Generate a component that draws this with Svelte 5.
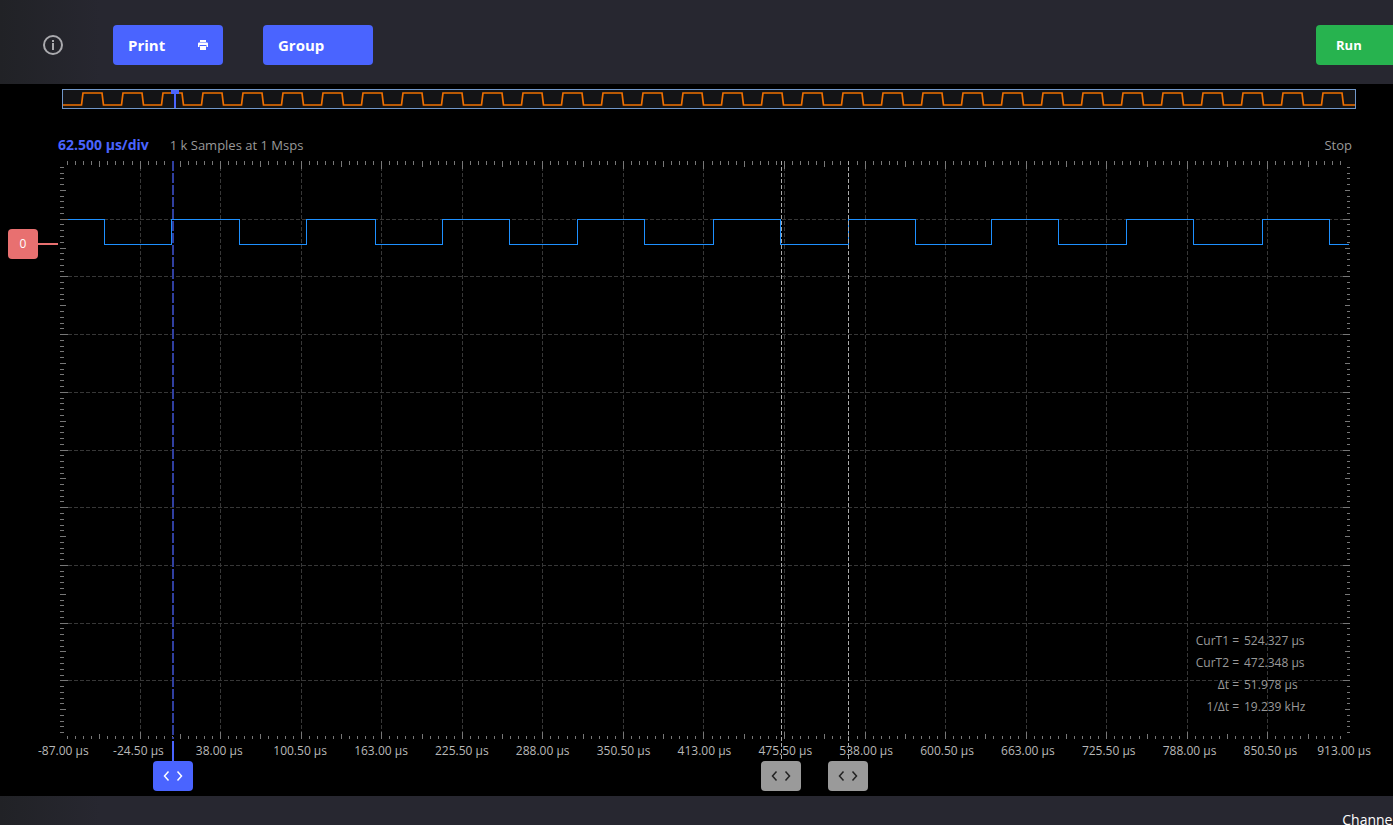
<script>
  let plotWidth = $state(1290);
  let overviewWidth = $state(1294);

  const plotHeight = 578;
  const columns = 16;
  const rows = 10;
  const edges = [44, 111, 179, 246, 315, 382, 449, 517, 584, 653, 720, 788, 855, 931, 998, 1066, 1133, 1202, 1269];
  const labels = ['-24.50', '38.00', '100.50', '163.00', '225.50', '288.00', '350.50', '413.00', '475.50', '538.00', '600.50', '663.00', '725.50', '788.00', '850.50'];
  const readouts = [
    ['CurT1 =', '524.327 µs'],
    ['CurT2 =', '472.348 µs'],
    ['Δt =', '51.978 µs'],
    ['1/Δt =', '19.239 kHz']
  ];

  const scale = $derived(plotWidth / 1290);
  const place = (x) => Math.round(x * scale);
  const columnX = (k) => Math.floor((k * 80.56 - 0.5) * scale) + 0.5;
  const rowY = (k) => Math.floor(0.5 + k * 57.7) + 0.5;

  const verticals = $derived(Array.from({ length: columns - 1 }, (_, i) => columnX(i + 1)));
  const horizontals = Array.from({ length: rows - 1 }, (_, i) => rowY(i + 1));
  const tickLength = (i) => (i % 10 === 0 ? 8 : i % 5 === 0 ? 6 : 4);

  const ticks = $derived.by(() => {
    let d = '';
    for (let i = 1; i < columns * 10; i++) {
      const x = columnX(i / 10);
      const n = tickLength(i);
      d += `M${x} 0v${n}M${x} ${plotHeight}v${-(n === 8 ? 7 : n === 6 ? 5 : 3)}`;
    }
    for (let i = 1; i < rows * 10; i++) {
      const y = rowY(i / 10);
      const n = tickLength(i);
      d += `M0 ${y}h${n}M${plotWidth} ${y}h${-(n - 1)}`;
    }
    return d;
  });

  const wave = $derived.by(() => {
    let d = 'M2 58.5';
    edges.forEach((x, i) => (d += `H${place(x) + 0.5}V${i % 2 ? 58.5 : 83.5}`));
    return d + `H${plotWidth - 1}`;
  });

  const pulses = $derived.by(() => {
    const step = overviewWidth / 1294;
    let d = 'M1 16';
    for (let i = 0; i < 32; i++) {
      const x = (20 + i * 40) * step;
      d += `H${x - 0.5}L${x + 1} 4H${x + 20}L${x + 21.5} 16`;
    }
    return d + `H${overviewWidth - 1}`;
  });

  const cursors = [
    { x: 113, name: 'Trigger position', kind: 'trigger' },
    { x: 721, name: 'Time cursor 2', kind: 'time' },
    { x: 788, name: 'Time cursor 1', kind: 'time' }
  ];
</script>

<div class="app">
  <header>
    <button class="info" aria-label="Information">
      <svg width="22" height="22" viewBox="0 0 22 22">
        <circle cx="11" cy="11" r="9" fill="none" stroke="#aaaaae" stroke-width="2" />
        <path d="M10 6h2v2h-2zM10 9h2v7h-2z" fill="#aaaaae" />
      </svg>
    </button>
    <button class="action">
      Print
      <svg width="10" height="10" viewBox="0 0 10 10" aria-hidden="true">
        <path d="M2 0h6v2H2zM1 2.5h8q1 0 1 1V7H8.5V5h-7v2H0V3.500q0-1 1-1zM2 6h6v4H2z" fill="#fff" />
      </svg>
    </button>
    <button class="action">Group</button>
    <button class="run">Run</button>
  </header>

  <main>
    <div class="overview" bind:clientWidth={overviewWidth}>
      <svg width="100%" height="20">
        <rect x="0.5" y="0.5" width={overviewWidth - 1} height="19" fill="#141416" stroke="#7096c8" />
        <path d={pulses} fill="none" stroke="#f07000" stroke-width="1.7" />
        <path d="M109 1h8v4h-3v14h-2V5h-3z" fill="#4a64ff" />
      </svg>
    </div>

    <div class="status">
      <strong>62.500 µs/div</strong>
      <span>1 k Samples at 1 Msps</span>
      <span class="state">Stop</span>
    </div>

    <div class="scope">
      <div class="gutter"><button class="channel">0</button><i></i></div>
      <div class="plot" bind:clientWidth={plotWidth}>
        <div class="screen">
          <svg width="100%" height={plotHeight} shape-rendering="crispEdges">
            <g stroke="#373737" stroke-dasharray="4 2">
              {#each verticals as x}<path d="M{x} 0V{plotHeight}" />{/each}
              {#each horizontals as y}<path d="M2 {y}H{plotWidth}" />{/each}
            </g>
            <path d={wave} fill="none" stroke="#1e90ff" />
            <path d={ticks} stroke="#777" />
          </svg>
          <dl>
            {#each readouts as [name, value]}
              <dt>{name}</dt>
              <dd>{value}</dd>
            {/each}
          </dl>
        </div>
        <div class="axis">
          <span>-87.00 µs</span>
          {#each labels as label}<span>{label} µs</span>{/each}
          <span>913.00 µs</span>
        </div>
        <svg class="lines" width="100%" height="600" shape-rendering="crispEdges">
          {#each cursors as c}
            {#if c.kind === 'trigger'}
              <path d="M{place(c.x)} 0V{plotHeight}" stroke="#303fa0" stroke-width="2" stroke-dasharray="10 2" />
              <path d="M{place(c.x)} 580V600" stroke="#4a64ff" stroke-width="2" />
            {:else}
              <path d="M{place(c.x) + 0.5} 0V600" stroke="#aaa" stroke-dasharray="4 2" />
            {/if}
          {/each}
        </svg>
        {#each cursors as c}
          <button class="handle {c.kind}" aria-label={c.name} style:left="{place(c.x)}px">
            <svg width="20" height="10" viewBox="0 0 20 10">
              <path d="M5.500 0.500L1.500 5l4 4.500M14.500 0.500l4 4.500l-4 4.500" fill="none" stroke="currentColor" stroke-width="1.500" />
            </svg>
          </button>
        {/each}
      </div>
    </div>
  </main>

  <footer><span>Channel</span></footer>
</div>

<style>
  :global(body) {
    margin: 0;
    background: #000;
  }
  .app {
    display: flex;
    flex-direction: column;
    height: 100vh;
    overflow: hidden;
    color: #b8b8b8;
    font: 12px/20px "Open Sans", "Noto Sans", sans-serif;
  }
  svg {
    display: block;
  }
  button {
    padding: 0;
    border: 0;
    font: inherit;
    color: #fff;
    background: none;
    cursor: pointer;
  }
  header,
  footer {
    background: linear-gradient(90deg, #212226, #272730 100px);
  }
  header {
    display: flex;
    align-items: center;
    gap: 40px;
    flex: none;
    height: 84px;
    padding: 6px 0 0 42px;
    box-sizing: border-box;
  }
  .info {
    margin-right: 9px;
  }
  .action,
  .run {
    display: flex;
    align-items: center;
    justify-content: space-between;
    width: 110px;
    height: 40px;
    padding: 0 15px;
    border-radius: 4px;
    background: #4a64ff;
    font-size: 15px;
    font-weight: 700;
  }
  .run {
    width: 77px;
    margin-left: auto;
    padding: 0 20px;
    border-radius: 4px 0 0 4px;
    background: #27b34f;
    font-size: 13px;
  }
  main {
    flex: none;
    padding-bottom: 35px;
    background: #000;
  }
  .overview {
    margin: 5px 37px 26px 62px;
  }
  .status {
    display: flex;
    gap: 21px;
    height: 26px;
    margin: 0 41px 0 58px;
    color: #999;
    font-size: 13px;
  }
  .status strong {
    color: #4a64ff;
    font-size: 14px;
  }
  .state {
    margin-left: auto;
  }
  .scope {
    display: flex;
    padding-right: 43px;
  }
  .gutter {
    display: flex;
    align-items: center;
    flex: none;
    width: 52px;
    height: 30px;
    margin-top: 68px;
    padding-left: 8px;
  }
  .channel {
    width: 30px;
    height: 30px;
    border-radius: 4px;
    background: #e87070;
  }
  .gutter i {
    width: 20px;
    height: 2px;
    background: #e87070;
  }
  .plot {
    position: relative;
    flex: 1;
    min-width: 0;
  }
  .screen {
    position: relative;
  }
  dl {
    position: absolute;
    right: 40px;
    bottom: 21px;
    display: grid;
    grid-template-columns: auto 66px;
    column-gap: 5px;
    margin: 0;
    color: #999;
    line-height: 22px;
    text-align: right;
  }
  dd {
    margin: 0;
    text-align: left;
    white-space: nowrap;
  }
  .axis {
    display: flex;
    height: 22px;
    margin: 0 -21px 0 -22px;
    line-height: 24px;
    text-align: center;
    white-space: nowrap;
  }
  .axis span {
    flex: 1;
  }
  .axis span:first-child {
    flex: 0 0 60px;
    text-align: left;
  }
  .axis span:last-child {
    flex: 0 0 60px;
    text-align: right;
  }
  .lines {
    position: absolute;
    top: 0;
    left: 0;
    pointer-events: none;
  }
  .handle {
    position: absolute;
    top: 600px;
    display: grid;
    place-items: center;
    width: 40px;
    height: 30px;
    margin-left: -20px;
    border-radius: 4px;
    background: #9a9a9a;
    color: #222;
  }
  .trigger {
    background: #4a64ff;
    color: #fff;
  }
  footer {
    flex: 1;
    min-height: 0;
    overflow: hidden;
    text-align: right;
    color: #fff;
    font-size: 14px;
  }
  footer span {
    display: block;
    margin-right: -3px;
    padding-top: 14px;
  }
</style>
